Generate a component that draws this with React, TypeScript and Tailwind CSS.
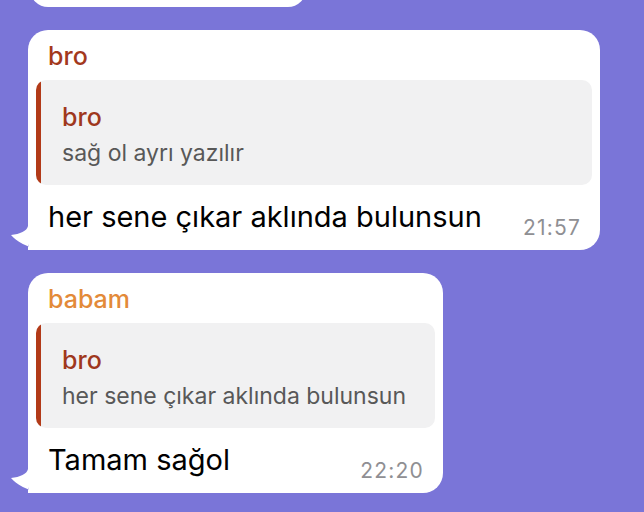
const font = { fontFamily: "Inter, 'Noto Sans', sans-serif" };

function Tail() {
  return (
    <svg
      className="absolute -left-[20px] bottom-0"
      width="40"
      height="40"
      viewBox="0 0 40 40"
    >
      <path
        d="M20 0 L20 16 C19 21 12 24 3 25 C8 31 18 38 38 40 L20 40 Z"
        fill="#ffffff"
      />
    </svg>
  );
}

type Msg = {
  author: string;
  authorColor: string;
  quoteName: string;
  quoteText: string;
  text: string;
  time: string;
  width: string;
};

function Bubble({ msg }: { msg: Msg }) {
  return (
    <div className={`relative ml-[28px] ${msg.width} rounded-[20px] rounded-bl-[6px] bg-white pb-[15px]`}>
      <Tail />
      <div className={`pl-[20px] pt-[12px] text-[25px] leading-[28px] font-medium ${msg.authorColor}`}>
        {msg.author}
      </div>
      <div className="mx-[8px] mt-[10px] flex rounded-[10px] bg-[#f1f1f2] overflow-hidden">
        <div className="w-[5px] shrink-0 bg-[#b23a18] rounded-l-[10px]" />
        <div className="pl-[21px] pr-[20px] pt-[23px] pb-[19px]">
          <div className="text-[25px] leading-[28px] font-medium text-[#9f381d]">{msg.quoteName}</div>
          <div className="mt-[9px] text-[23px] leading-[26px] text-[#585858]">{msg.quoteText}</div>
        </div>
      </div>
      <div className="mt-[14px] flex items-end justify-between pl-[20px] pr-[19px]">
        <span className="text-[29px] leading-[36px] text-black">{msg.text}</span>
        <span className="mb-[-6px] text-[21px] leading-[26px] tracking-[1.2px] text-[#8f8f93]">{msg.time}</span>
      </div>
    </div>
  );
}

const messages: Msg[] = [
  {
    author: "bro",
    authorColor: "text-[#a3391d]",
    quoteName: "bro",
    quoteText: "sağ ol ayrı yazılır",
    text: "her sene çıkar aklında bulunsun",
    time: "21:57",
    width: "w-[572px]",
  },
  {
    author: "babam",
    authorColor: "text-[#e38a39]",
    quoteName: "bro",
    quoteText: "her sene çıkar aklında bulunsun",
    text: "Tamam sağol",
    time: "22:20",
    width: "w-[415px]",
  },
];

export default function App() {
  return (
    <div className="h-[512px] w-[644px] overflow-hidden bg-[#7a75d8]" style={font}>
      {/* previous bubble, cut off at the top */}
      <div className="-mt-[33px] ml-[30px] h-[40px] w-[276px] rounded-[18px] bg-white" />
      <div className="mt-[23px] flex flex-col gap-[23px]">
        {messages.map((m) => (
          <Bubble key={m.time} msg={m} />
        ))}
      </div>
    </div>
  );
}
